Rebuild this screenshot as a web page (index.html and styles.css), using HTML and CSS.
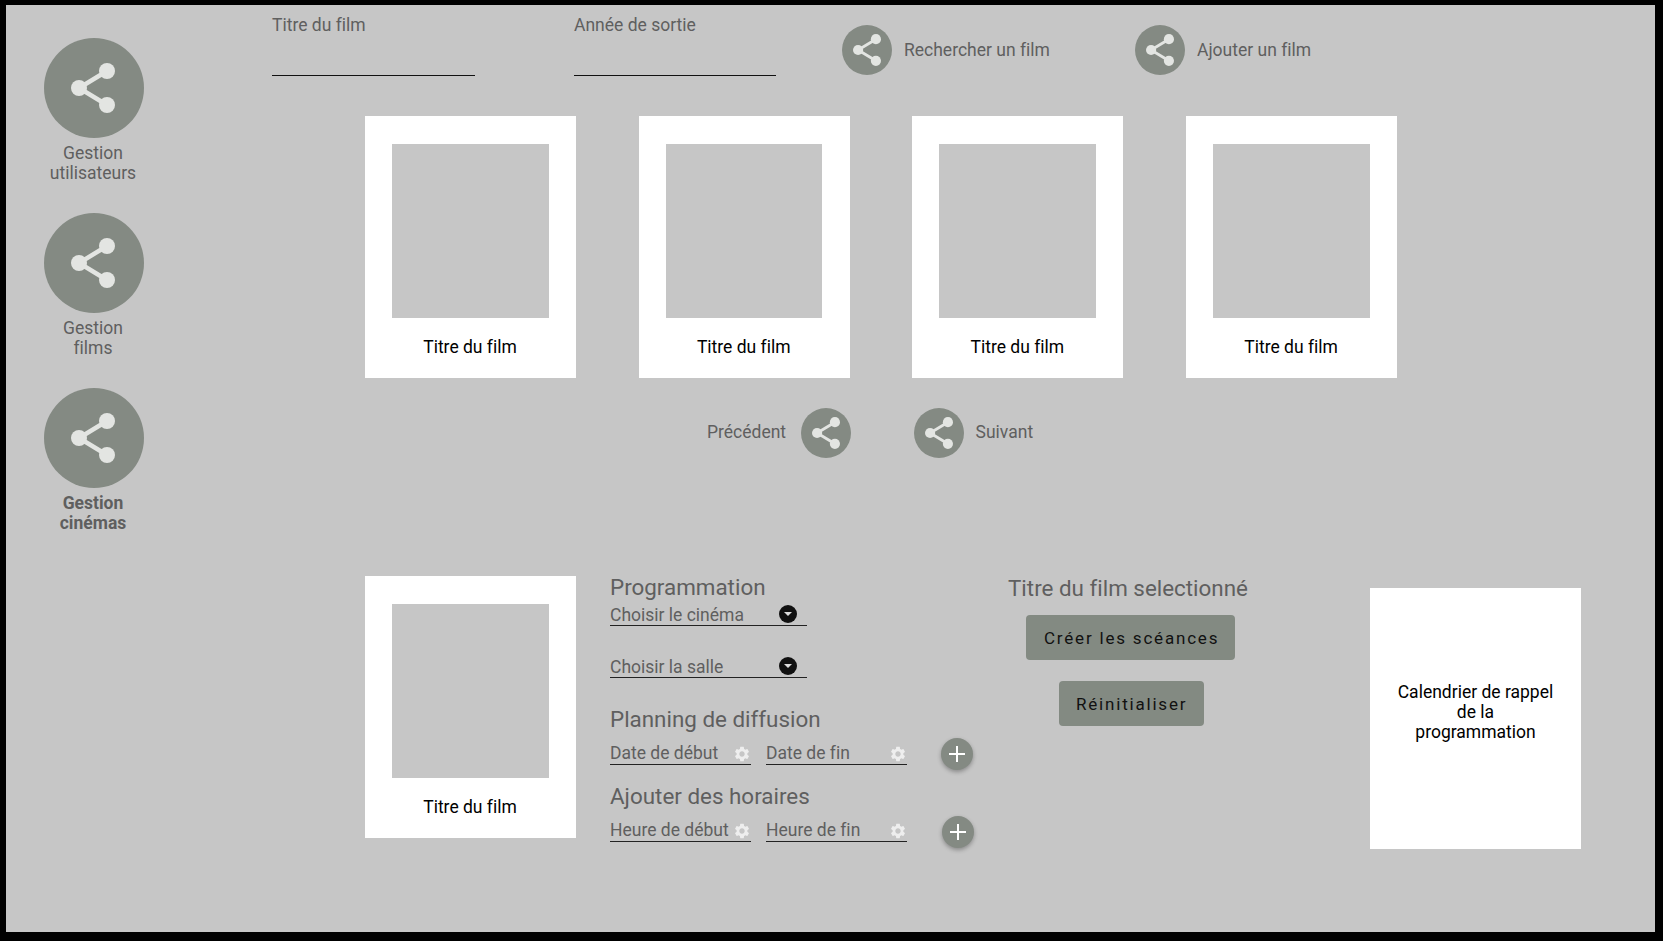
FILE: index.html
```html
<!DOCTYPE html>
<html lang="fr">

<head>
    <meta charset="UTF-8">
    <meta name="viewport" content="width=device-width, initial-scale=1.0">
    <title>Gestion cinémas</title>

    <link rel="stylesheet" href="styles.css">
</head>

<body>
    <svg class="defs" width="0" height="0">
        <symbol id="share" viewBox="0 0 44 50">
            <path d="M36 8 8 25 36 42" fill="none" stroke="currentColor" stroke-width="4.5"/>
            <circle cx="36" cy="8" r="8" fill="currentColor"/>
            <circle cx="8" cy="25" r="8" fill="currentColor"/>
            <circle cx="36" cy="42" r="8" fill="currentColor"/>
        </symbol>
        <symbol id="gear" viewBox="0 0 24 24">
            <path fill="currentColor" d="M19.14 12.94c.04-.3.06-.61.06-.94 0-.32-.02-.64-.07-.94l2.03-1.58c.18-.14.23-.41.12-.61l-1.92-3.32c-.12-.22-.37-.29-.59-.22l-2.39.96c-.5-.38-1.03-.7-1.62-.94l-.36-2.54c-.04-.24-.24-.41-.48-.41h-3.84c-.24 0-.43.17-.47.41l-.36 2.54c-.59.24-1.13.57-1.62.94l-2.39-.96c-.22-.08-.47 0-.59.22L2.74 8.87c-.12.21-.08.47.12.61l2.03 1.58c-.05.3-.09.63-.09.94s.02.64.07.94l-2.03 1.58c-.18.14-.23.41-.12.61l1.92 3.32c.12.22.37.29.59.22l2.39-.96c.5.38 1.03.7 1.62.94l.36 2.54c.05.24.24.41.48.41h3.84c.24 0 .44-.17.47-.41l.36-2.54c.59-.24 1.13-.56 1.62-.94l2.39.96c.22.08.47 0 .59-.22l1.92-3.32c.12-.22.07-.47-.12-.61l-2.01-1.58zM12 15.6c-1.98 0-3.6-1.62-3.6-3.6s1.62-3.6 3.6-3.6 3.6 1.62 3.6 3.6-1.62 3.6-3.6 3.6z"/>
        </symbol>
        <symbol id="plus" viewBox="0 0 16 16">
            <path d="M8 0V16M0 8H16" fill="none" stroke="currentColor" stroke-width="2"/>
        </symbol>
    </svg>

    <div class="screen">
        <nav class="sidebar">
            <a class="nav-item">
                <span class="circle circle-big"><svg class="share-big"><use href="#share"/></svg></span>
                <span class="nav-label">Gestion<br>utilisateurs</span>
            </a>
            <a class="nav-item">
                <span class="circle circle-big"><svg class="share-big"><use href="#share"/></svg></span>
                <span class="nav-label">Gestion<br>films</span>
            </a>
            <a class="nav-item active">
                <span class="circle circle-big"><svg class="share-big"><use href="#share"/></svg></span>
                <span class="nav-label">Gestion<br>cinémas</span>
            </a>
        </nav>

        <main class="content">
            <div class="topbar">
                <div class="field-top">Titre du film</div>
                <div class="field-top">Année de sortie</div>
                <div class="action search">
                    <span class="circle"><svg class="share-small"><use href="#share"/></svg></span>
                    <span class="action-text">Rechercher un film</span>
                </div>
                <div class="action">
                    <span class="circle"><svg class="share-small"><use href="#share"/></svg></span>
                    <span class="action-text">Ajouter un film</span>
                </div>
            </div>

            <div class="cards">
                <div class="card"><div class="poster"></div><div class="card-title">Titre du film</div></div>
                <div class="card"><div class="poster"></div><div class="card-title">Titre du film</div></div>
                <div class="card"><div class="poster"></div><div class="card-title">Titre du film</div></div>
                <div class="card"><div class="poster"></div><div class="card-title">Titre du film</div></div>
            </div>

            <div class="pager">
                <div class="action prev">
                    <span class="action-text">Précédent</span>
                    <span class="circle"><svg class="share-small"><use href="#share"/></svg></span>
                </div>
                <div class="action">
                    <span class="circle"><svg class="share-small"><use href="#share"/></svg></span>
                    <span class="action-text">Suivant</span>
                </div>
            </div>

            <div class="bottom">
                <div class="card"><div class="poster"></div><div class="card-title">Titre du film</div></div>

                <div class="prog">
                    <h2>Programmation</h2>
                    <div class="select">Choisir le cinéma <span class="drop"></span></div>
                    <div class="select second">Choisir la salle <span class="drop"></span></div>

                    <h2 class="planning">Planning de diffusion</h2>
                    <div class="row">
                        <div class="input">Date de début <svg class="gear"><use href="#gear"/></svg></div>
                        <div class="input">Date de fin <svg class="gear"><use href="#gear"/></svg></div>
                        <span class="fab"><svg class="plus"><use href="#plus"/></svg></span>
                    </div>

                    <h2 class="horaires">Ajouter des horaires</h2>
                    <div class="row">
                        <div class="input">Heure de début <svg class="gear"><use href="#gear"/></svg></div>
                        <div class="input">Heure de fin <svg class="gear"><use href="#gear"/></svg></div>
                        <span class="fab shifted"><svg class="plus"><use href="#plus"/></svg></span>
                    </div>
                </div>

                <div class="selected">
                    <h2>Titre du film selectionné</h2>
                    <button type="button">Créer les scéances</button>
                    <button type="button">Réinitialiser</button>
                </div>

                <div class="calendar">Calendrier de rappel<br>de la<br>programmation</div>
            </div>
        </main>
    </div>
</body>

</html>
```

FILE: styles.css
```css
body {
    margin: 0;
    background-color: #000;
    font-family: Roboto, sans-serif;
    font-size: 17.5px;
    font-variant-ligatures: none;
    color: #5f5f5f;
}

.defs {
    position: absolute;
}

.screen {
    display: flex;
    width: 1649px;
    height: 927px;
    margin: 5px 0 0 6px;
    background-color: #c6c6c6;
}

/* menu de gauche */
.sidebar {
    width: 266px;
    box-sizing: border-box;
    padding: 33px 0 0 38px;
    flex-shrink: 0;
}

.nav-item {
    display: flex;
    flex-direction: column;
    align-items: center;
    width: 100px;
    height: 146px;
    margin-bottom: 29px;
}

.nav-label {
    margin: 5px 2px 0 0;
    line-height: 20px;
    text-align: center;
    white-space: nowrap;
}

.active .nav-label {
    font-weight: 700;
}

.circle {
    display: flex;
    justify-content: center;
    align-items: center;
    flex-shrink: 0;
    width: 50px;
    height: 50px;
    border-radius: 50%;
    background-color: #848a83;
    color: #e3e5e2;
}

.circle-big {
    width: 100px;
    height: 100px;
}

.share-big {
    width: 44px;
    height: 50px;
    margin-right: 2px;
}

.share-small {
    width: 28px;
    height: 32px;
}

/* barre du haut */
.topbar {
    display: flex;
    align-items: flex-start;
    padding-top: 9px;
    height: 62px;
}

.field-top {
    width: 203px;
    height: 60px;
    padding-top: 1px;
    line-height: 20px;
    margin-right: 99px;
    border-bottom: 1px solid #111;
}

.field-top + .field-top {
    width: 202px;
    margin-right: 66px;
}

.action {
    display: flex;
    align-items: center;
    gap: 12px;
    margin-top: 11px;
}

.action-text {
    margin-bottom: 1px;
}

.search {
    width: 293px;
}

/* cartes */
.cards {
    display: flex;
    gap: 62.7px;
    margin: 40px 0 0 93px;
}

.card {
    width: 211px;
    height: 262px;
    box-sizing: border-box;
    padding: 28px 27px 0 27px;
    background-color: #fff;
    flex-shrink: 0;
}

.poster {
    width: 156.5px;
    height: 174px;
    background-color: #c6c6c6;
}

.card-title {
    margin: 19px 1px 0 0;
    line-height: 20px;
    font-size: 17.5px;
    text-align: center;
    color: #000;
}

.pager {
    display: flex;
    gap: 62.5px;
    margin: 30px 0 0 435px;
}

.pager .action {
    margin-top: 0;
}

.pager .action-text {
    margin-bottom: 3px;
}

.pager .prev {
    gap: 15px;
}

/* partie basse */
.bottom {
    display: flex;
    align-items: flex-start;
    margin: 118px 0 0 93px;
}

h2 {
    margin: 0;
    font-size: 22.4px;
    font-weight: 400;
    line-height: 20px;
}

.prog {
    width: 398px;
    margin-left: 34px;
    padding-top: 1px;
    flex-shrink: 0;
}

.select {
    position: relative;
    width: 197px;
    height: 28px;
    line-height: 36px;
    border-bottom: 1.5px solid #222;
}

.select.second {
    margin-top: 23px;
}

.drop {
    position: absolute;
    right: 10px;
    top: 8px;
    width: 18px;
    height: 18px;
    border-radius: 50%;
    background-color: #111;
}

.drop::after {
    content: "";
    position: absolute;
    left: 5px;
    top: 7px;
    border: 4px solid transparent;
    border-top: 4px solid #ddd;
    border-bottom: 0;
}

.planning {
    margin-top: 31px;
}

.horaires {
    margin-top: 21px;
}

.row {
    display: flex;
    align-items: flex-start;
    gap: 15px;
    height: 36px;
}

.input {
    display: flex;
    justify-content: space-between;
    align-items: flex-end;
    width: 141px;
    height: 36px;
    padding-bottom: 1px;
    line-height: 20px;
    box-sizing: border-box;
    border-bottom: 1.5px solid #222;
    white-space: nowrap;
}

.gear {
    width: 18px;
    height: 18px;
    color: #eeeeee;
    flex-shrink: 0;
}

.fab {
    display: flex;
    justify-content: center;
    align-items: center;
    flex-shrink: 0;
    width: 32px;
    height: 32px;
    margin: 9px 0 0 19px;
    border-radius: 50%;
    background-color: #848a83;
    color: #fff;
    box-shadow: 0 2px 4px rgba(0, 0, 0, 0.3);
}

.fab.shifted {
    margin: 10px 0 0 20px;
}

.plus {
    width: 16px;
    height: 16px;
}

.selected {
    width: 362px;
    flex-shrink: 0;
    display: flex;
    flex-direction: column;
    align-items: flex-start;
}

.selected h2 {
    margin-top: 2px;
}

.selected button {
    display: block;
    height: 45px;
    padding: 1px 16px 0 18px;
    border: none;
    border-radius: 4px;
    background-color: #838a82;
    color: #111;
    font-family: Roboto, sans-serif;
    font-size: 17px;
    font-variant-ligatures: none;
    letter-spacing: 1.8px;
    margin: 17px 0 0 18px;
}

.selected button + button {
    padding: 1px 17px 0;
    margin: 21px 0 0 51px;
}

.calendar {
    display: flex;
    align-items: center;
    justify-content: center;
    width: 211px;
    height: 261px;
    margin-top: 12px;
    box-sizing: border-box;
    padding-bottom: 14px;
    background-color: #fff;
    color: #000;
    font-size: 17.5px;
    line-height: 20px;
    text-align: center;
    flex-shrink: 0;
}
```
